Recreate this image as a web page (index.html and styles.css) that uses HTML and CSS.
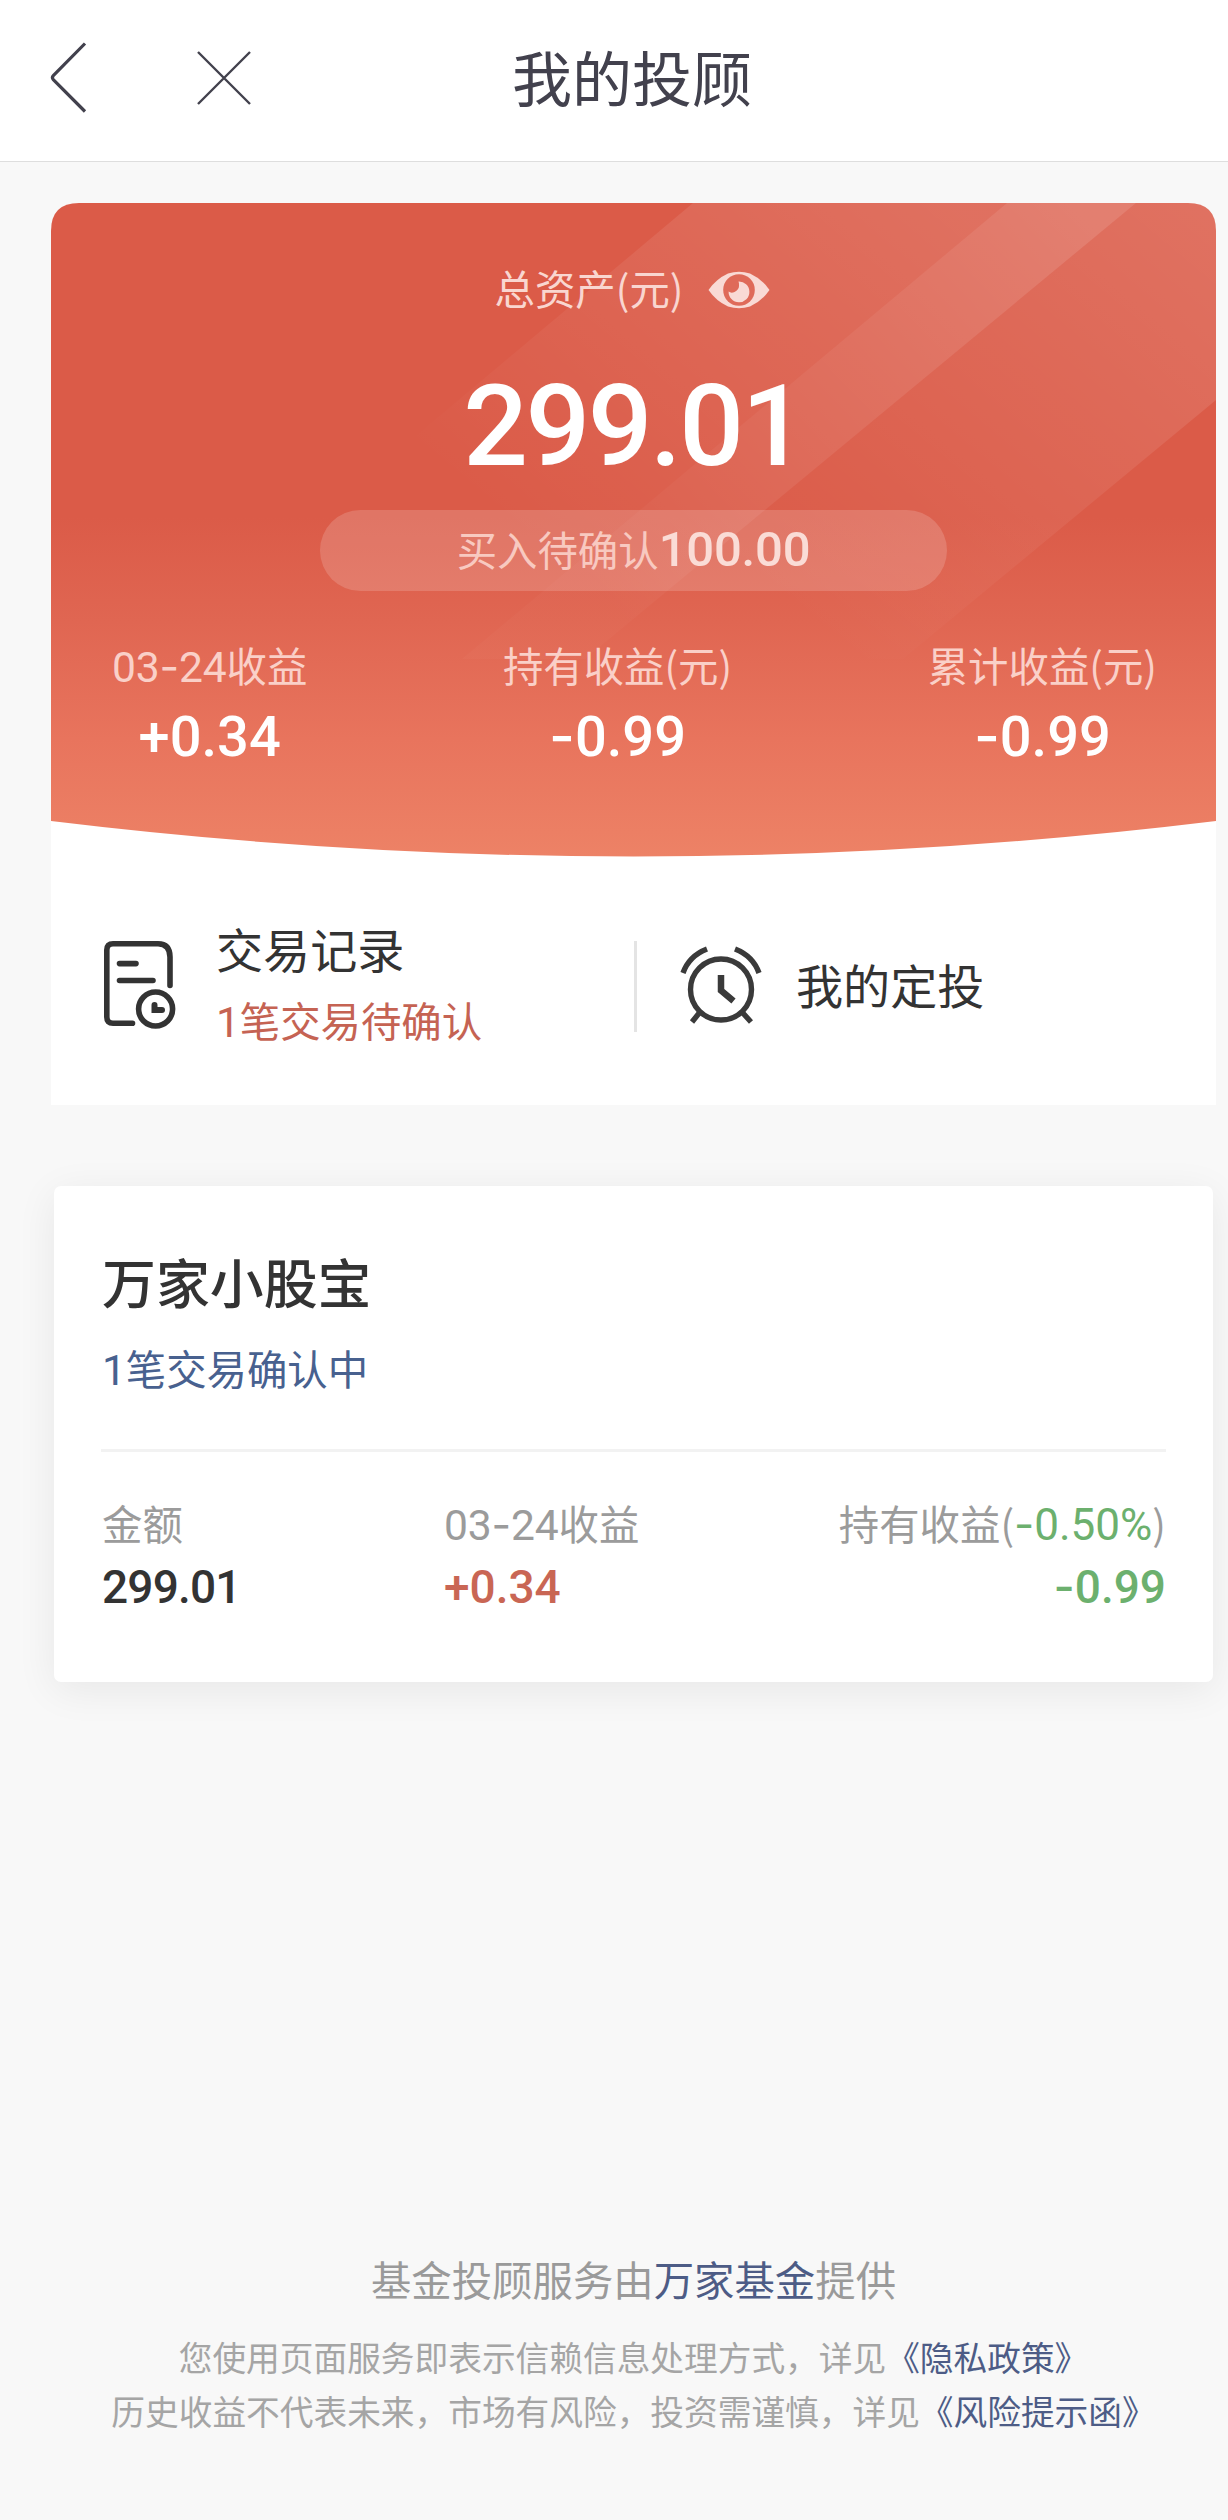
FILE: index.html
```html
<!DOCTYPE html>
<html lang="zh-CN">
<head>
<meta charset="utf-8">
<title>我的投顾</title>
<link rel="stylesheet" href="styles.css">
</head>
<body>
<header class="nav">
  <svg class="nav-back" width="40" height="76" viewBox="0 0 40 76" fill="none" stroke="#42414d" stroke-width="3.200"><path d="M36 4.500 4.300 36.600Q2.500 38.600 4.300 40.600L36 72.500"/></svg>
  <svg class="nav-close" width="56" height="56" viewBox="0 0 56 56" fill="none" stroke="#42414d" stroke-width="2.4"><path d="M2 2 54 54M54 2 2 54"/></svg>
  <h1 class="nav-title">我的投顾</h1>
</header>

<main class="page">
  <section class="assets">
    <div class="hero">
      <svg class="hero-bg" width="1165" height="654" viewBox="0 0 1165 654">
        <defs>
          <linearGradient id="base" x1="0" y1="0" x2="0" y2="1">
            <stop offset="0" stop-color="#db5b48"/><stop offset=".48" stop-color="#db5b48"/>
            <stop offset=".64" stop-color="#e06652"/><stop offset=".82" stop-color="#e8745d"/><stop offset="1" stop-color="#ed8266"/>
          </linearGradient>
          <linearGradient id="beam" gradientUnits="userSpaceOnUse" x1="900" y1="0" x2="560" y2="410">
            <stop offset="0" stop-color="#fff" stop-opacity=".13"/><stop offset="1" stop-color="#fff" stop-opacity="0"/>
          </linearGradient>
          <linearGradient id="beam-right" gradientUnits="userSpaceOnUse" x1="1165" y1="0" x2="790" y2="450">
            <stop offset="0" stop-color="#fff" stop-opacity=".14"/><stop offset="1" stop-color="#fff" stop-opacity="0"/>
          </linearGradient>
          <linearGradient id="beam-core" gradientUnits="userSpaceOnUse" x1="1020" y1="0" x2="580" y2="420">
            <stop offset="0" stop-color="#fff" stop-opacity=".22"/><stop offset="1" stop-color="#fff" stop-opacity=".02"/>
          </linearGradient>
          <clipPath id="hero-shape"><path d="M0 28Q0 0 28 0H1137Q1165 0 1165 28V618Q582.500 689 0 618Z"/></clipPath>
        </defs>
        <g clip-path="url(#hero-shape)">
          <rect width="1165" height="654" fill="url(#base)"/>
          <path d="M642 0H956L460 415H148Z" fill="url(#beam)"/>
          <path d="M956 0H1085L534 456H411Z" fill="url(#beam-core)"/>
          <path d="M1085 0H1165V197L852 456H534Z" fill="url(#beam-right)"/>
        </g>
      </svg>
      <div class="total-label">
        <span>总资产(元)</span>
        <svg width="62" height="38" viewBox="0 0 62 38"><path d="M.5 19Q8 8 20 2.500Q31-1 42 2.500Q54 8 61.500 19Q54 30 42 35.500Q31 39 20 35.500Q8 30 .5 19Z" fill="#f9dad5"/><circle cx="31" cy="19" r="15.800" fill="#df6a59"/><path d="M30.500 10.500A10.400 10.400 0 1 1 20.600 20.500Q23 22.500 26.500 21Q31 18.500 31 15Q31.200 12 30.500 10.500Z" fill="#f9dad5"/></svg>
      </div>
      <div class="total">299.01</div>
      <div class="pending">买入待确认<span class="pending-num">100.00</span></div>
      <div class="stats">
        <div class="stat"><div class="stat-label"><span class="num">03<span class="dash">-</span>24</span>收益</div><div class="stat-value">+0.34</div></div>
        <div class="stat"><div class="stat-label">持有收益(元)</div><div class="stat-value"><span class="dash">-</span>0.99</div></div>
        <div class="stat"><div class="stat-label">累计收益(元)</div><div class="stat-value"><span class="dash">-</span>0.99</div></div>
      </div>
    </div>
    <div class="links">
      <a class="link link-records">
        <svg width="72" height="88" viewBox="0 0 72 88" fill="none" stroke="#333" stroke-width="5.600" stroke-linecap="round"><path d="M28.500 82.300H9Q2.800 82.300 2.800 76V9Q2.800 2.800 9 2.800H54Q66 3 66 16V44.500M15.500 22.600H32M15.500 39.500H49"/><circle cx="51.600" cy="68" r="17"/><path d="M50.500 64V69H58" stroke-width="6"/></svg>
        <span class="link-text"><span class="link-title">交易记录</span><span class="link-note"><span class="num">1</span>笔交易待确认</span></span>
      </a>
      <a class="link link-plan">
        <svg width="82" height="80" viewBox="0 0 82 80" fill="none" stroke="#3a3a3a" stroke-width="5.400"><circle cx="41" cy="43.500" r="30.500"/><path d="M3 27Q9 10 27 3M55 3Q73 10 79 27M20 66 12 76M62 66 71 76"/><path d="M41 29V44.500L53.500 55" stroke-width="6.500"/></svg>
        <span class="link-title">我的定投</span>
      </a>
    </div>
  </section>

  <section class="fund">
    <h2 class="fund-name">万家小股宝</h2>
    <div class="fund-note"><span class="num">1</span>笔交易确认中</div>
    <div class="fund-row">
      <div><div class="fund-label">金额</div><div class="fund-value amount">299.01</div></div>
      <div class="fund-day"><div class="fund-label"><span class="num">03<span class="dash">-</span>24</span>收益</div><div class="fund-value up">+0.34</div></div>
      <div class="fund-hold"><div class="fund-label">持有收益(<span class="num rate down"><span class="dash">-</span>0.50%</span>)</div><div class="fund-value down"><span class="dash">-</span>0.99</div></div>
    </div>
  </section>

  <footer class="foot">
    <p class="provider">基金投顾服务由<a>万家基金</a>提供</p>
    <p class="legal">您使用页面服务即表示信赖信息处理方式，详见<a>《隐私政策》</a></p>
    <p class="legal">历史收益不代表未来，市场有风险，投资需谨慎，详见<a>《风险提示函》</a></p>
  </footer>
</main>
</body>
</html>
```
FILE: styles.css
```css
* { box-sizing: border-box; margin: 0; padding: 0; }
body {
  width: 1228px;
  height: 2520px;
  display: flex;
  flex-direction: column;
  background: #f8f8f8;
  color: #333;
  font: 40.4px/60px "Noto Sans CJK SC", sans-serif;
  white-space: nowrap;
  overflow: hidden;
}
.nav {
  height: 162px;
  flex: none;
  display: grid;
  grid-template-columns: 147px 300px 1fr;
  align-items: start;
  padding: 39px 0 0 49px;
  background: #fff;
  border-bottom: 1px solid #dedede;
}
.nav-close { margin-top: 11px; }
.nav-title { font-size: 60px; font-weight: 400; line-height: 73px; color: #42414d; padding-left: 16px; }

.page {
  flex: 1;
  width: 1165px;
  margin: 41px 0 0 51px;
  display: flex;
  flex-direction: column;
}
.assets { height: 902px; background: #fff; border-radius: 28px 28px 0 0; }
.hero { position: relative; height: 654px; padding-top: 55px; color: #fff; }
.hero-bg { position: absolute; left: 0; top: 0; }
.hero > div { position: relative; }
.total-label { display: flex; justify-content: center; align-items: center; gap: 25px; padding-right: 2px; color: #f9d6d0; height: 60px; }
.total-label svg { margin-top: 3px; }
.total { height: 120px; margin-top: 48px; text-align: center; font: 500 114px/120px Roboto, sans-serif; letter-spacing: -2.5px; }
.pending { width: 627px; height: 81px; margin: 24px auto 0; border-radius: 41px; background: rgba(255,255,255,.16); text-align: center; line-height: 78px; color: #f8c9c0; }
.pending-num { font: 500 49px/78px Roboto, sans-serif; letter-spacing: -.2px; color: #fadcd6; }
.num { font-family: Roboto, sans-serif; font-size: 1.055em; line-height: 1; letter-spacing: -.004em; }
.rate { font-size: 1.09em; letter-spacing: 0; }
.dash { font-family: Inter, sans-serif; line-height: 1; }
.stats { display: flex; justify-content: space-between; margin: 44px 59px 0 61px; text-align: center; }
.stat-label { color: #fad0c8; }
.stat-value { font: 500 56px/66px Roboto, sans-serif; margin-top: 9px; }

.links { display: flex; height: 248px; padding-left: 53px; }
.link { display: flex; }
.link-records { width: 530px; padding-top: 84px; gap: 40px; }
.link-text { display: flex; flex-direction: column; margin-top: -28px; }
.link-title { font-size: 47.1px; line-height: 70px; }
.link-note { color: #c56353; line-height: 60px; margin-top: 7px; }
.link-plan { height: 91px; margin-top: 84px; border-left: 3px solid #e4e4e4; padding: 5px 0 0 43px; gap: 34px; }
.link-plan .link-title { margin-top: 3px; }

.fund {
  width: 1159px;
  height: 496px;
  margin: 81px 3px 0;
  padding: 55px 47px 0;
  background: #fff;
  border-radius: 7px;
  box-shadow: 0 8px 40px rgba(0,0,0,.07);
}
.fund-name { font-size: 53.9px; font-weight: 500; line-height: 80px; padding-left: 1px; }
.fund-note { color: #48618f; padding-left: 1px; margin-top: 17px; }
.fund-row { display: grid; grid-template-columns: 342px 1fr auto; margin-top: 51px; padding: 41px 0 0 1px; border-top: 3px solid #f2f2f2; }
.fund-label { color: #9b9b9b; height: 60px; }
.fund-value { font: 500 46px/56px Roboto, sans-serif; margin-top: 6px; }
.amount { letter-spacing: -.8px; }
.fund-hold { text-align: right; }
.up { color: #c96654; }
.down { color: #6cb06e; }

.foot { margin-top: 567px; text-align: center; color: #9a9a9a; }
.foot a { color: #4d5c86; }
.legal { font-size: 33.7px; line-height: 54px; color: #a5a5a5; }
.provider { margin-bottom: 21px; }
```
